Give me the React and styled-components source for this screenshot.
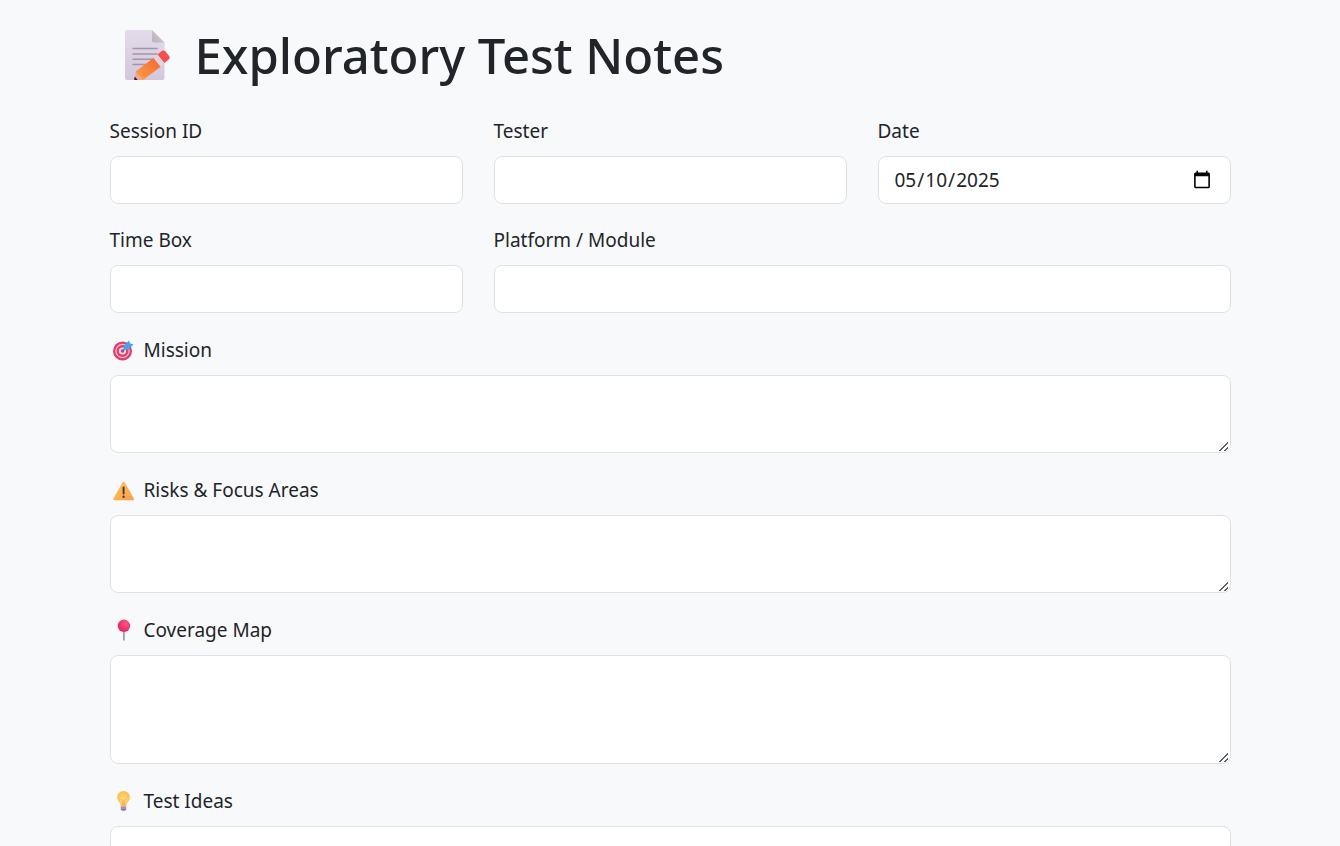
import React, { useState } from "react";
import styled, { createGlobalStyle } from "styled-components";

const GlobalStyle = createGlobalStyle`
  *,
  *::before,
  *::after {
    box-sizing: border-box;
  }

  body {
    margin: 0;
    background: #f8f9fa;
    color: #212529;
    font-family: "Segoe UI", "Noto Sans", sans-serif;
    font-size: 19px;
    line-height: 31px;
  }
`;

const Page = styled.main`
  max-width: 1153px;
  margin: 0 auto;
  padding: 25px 16px 48px;
`;

const Title = styled.h1`
  display: flex;
  align-items: center;
  gap: 15px;
  margin: 0 0 31px;
  padding-left: 10px;
  font-size: 49px;
  font-weight: 500;
  line-height: 60px;
`;

const Form = styled.form`
  display: flex;
  flex-direction: column;
  gap: 22px;
`;

const FieldGrid = styled.div`
  display: grid;
  grid-template-columns: repeat(3, 1fr);
  gap: 21px 31px;

  @media (max-width: 700px) {
    grid-template-columns: 1fr;
  }
`;

const Field = styled.div`
  min-width: 0;
  grid-column: ${({ $wide }) => ($wide ? "span 2" : "auto")};

  @media (max-width: 700px) {
    grid-column: auto;
  }
`;

const Label = styled.label`
  display: flex;
  align-items: center;
  gap: 8px;
  margin-bottom: 9px;
`;

const Input = styled.input`
  display: block;
  width: 100%;
  height: 48px;
  padding: 8px 16px 8px 15px;
  border: 1px solid #dee2e6;
  border-radius: 8px;
  background: #fff;
  color: inherit;
  font: inherit;

  &::-webkit-datetime-edit {
    padding: 0;
  }

  &::-webkit-datetime-edit-fields-wrapper {
    padding: 0;
  }

  &::-webkit-calendar-picker-indicator {
    width: 20px;
    height: 20px;
  }

  &:focus {
    outline: 4px solid #c2dbfe;
    border-color: #86b7fe;
  }
`;

const TextArea = styled(Input)`
  height: ${({ $tall }) => ($tall ? 109 : 78)}px;
  resize: vertical;

  &::-webkit-resizer {
    background: linear-gradient(
        135deg,
        transparent 45%,
        #606060 45%,
        #606060 56%,
        transparent 56%,
        transparent 73%,
        #606060 73%,
        #606060 84%,
        transparent 84%
      )
      right 2px bottom 1px / 9px 9px no-repeat;
  }
`;

const Icon = styled.svg`
  flex: none;
  width: ${({ $size }) => $size || 26}px;
  height: ${({ $size }) => $size || 26}px;
`;

function MemoIcon() {
  return (
    <Icon $size={60} viewBox="0 0 60 60" aria-hidden="true">
      <defs>
        <linearGradient id="paper" x1="0" y1="0" x2="0" y2="1">
          <stop offset="0" stopColor="#e3dbea" />
          <stop offset="1" stopColor="#d3c7dc" />
        </linearGradient>
        <linearGradient id="fold" x1="0" y1="1" x2="1" y2="0">
          <stop offset="0" stopColor="#b9b2bb" />
          <stop offset="1" stopColor="#d5cfd8" />
        </linearGradient>
        <linearGradient id="pencil" x1="0" y1="1" x2="1" y2="0">
          <stop offset="0" stopColor="#ffa04a" />
          <stop offset="1" stopColor="#f4652c" />
        </linearGradient>
      </defs>
      <path d="M7 5h25l12.500 12.500V53a2 2 0 0 1-2 2H7a2 2 0 0 1-2-2V7a2 2 0 0 1 2-2z" fill="url(#paper)" />
      <path d="M32 5l12.500 12.500H34a2 2 0 0 1-2-2z" fill="url(#fold)" />
      <path d="M13 23.500h24M13 29h24M13 34.300h24M13 39.500h18" stroke="#a096a8" strokeWidth="1.500" strokeLinecap="round" />
      <path d="M15.800 46.500L34 32.500l7 9L23 55h-5z" fill="url(#pencil)" />
      <path d="M15.800 46.500L23 55h-8.500z" fill="#e5ae91" />
      <path d="M14.700 51.500l-.5 3.500h3.500z" fill="#3a1238" />
      <path d="M33.500 33l4.500-3.600 7 8.800-4.500 3.600z" fill="#ded4e6" />
      <path d="M37.500 29.500l4-3.300c1.500-1.200 3-1 4.100.3l3.300 4.200c1.100 1.400 1 2.900-.4 4l-4 3.300z" fill="#f75048" />
    </Icon>
  );
}

function TargetIcon() {
  return (
    <Icon viewBox="0 1 26 26" aria-hidden="true">
      <circle cx="12.500" cy="14" r="9.500" fill="#df3f68" />
      <circle cx="12.500" cy="14" r="7.200" fill="#efc4d8" />
      <circle cx="12.500" cy="14" r="6" fill="#df3f68" />
      <circle cx="12.500" cy="14" r="3.600" fill="#f1d7e4" />
      <circle cx="12.500" cy="14" r="1.800" fill="#df3f68" />
      <path d="M12.500 14l6-6" stroke="#2476c4" strokeWidth="1.500" strokeLinecap="round" />
      <path d="M14 8.500l5-5 1.200 2.900 3.300.8-5.200 5.600-4.100-.6z" fill="#42a5ee" />
    </Icon>
  );
}

function WarningIcon() {
  return (
    <Icon viewBox="0 1 26 26" aria-hidden="true">
      <defs>
        <linearGradient id="warning" x1="0" y1="0" x2="1" y2="1">
          <stop offset="0" stopColor="#ffc950" />
          <stop offset="1" stopColor="#f89b50" />
        </linearGradient>
      </defs>
      <path d="M12.300 5.700c.7-1.200 2-1.200 2.700 0l8.800 15.700c.6 1.100 0 1.900-1.300 1.900H4.800c-1.300 0-1.900-.8-1.300-1.900z" fill="url(#warning)" />
      <path d="M13.600 10.500v6" stroke="#493c38" strokeWidth="2" strokeLinecap="round" />
      <circle cx="13.600" cy="19.800" r="1.200" fill="#493c38" />
    </Icon>
  );
}

function PinIcon() {
  return (
    <Icon viewBox="0 1 26 26" aria-hidden="true">
      <defs>
        <radialGradient id="pin" cx=".65" cy=".3" r=".7">
          <stop offset="0" stopColor="#ff5384" />
          <stop offset="1" stopColor="#e2285e" />
        </radialGradient>
      </defs>
      <path d="M13.900 13v10" stroke="#9d8ea8" strokeWidth="1.600" strokeLinecap="round" />
      <circle cx="13.900" cy="8.800" r="6.200" fill="url(#pin)" />
    </Icon>
  );
}

function BulbIcon() {
  return (
    <Icon viewBox="0 1 26 26" aria-hidden="true">
      <defs>
        <radialGradient id="bulb" cx=".5" cy=".55" r=".6">
          <stop offset="0" stopColor="#ffe08a" />
          <stop offset="1" stopColor="#fbb93d" />
        </radialGradient>
      </defs>
      <path d="M13.500 3a6.300 6.300 0 0 1 6.300 6.300c0 2.700-1.300 4-2.300 5.300-.8 1-.9 2.400-1.200 3.900h-5.600c-.3-1.500-.4-2.900-1.200-3.900-1-1.300-2.300-2.600-2.300-5.300A6.300 6.300 0 0 1 13.500 3z" fill="url(#bulb)" />
      <path d="M11.500 11l1.300 1.500v5M15.500 11l-1.300 1.500v5" fill="none" stroke="#ef9b35" strokeWidth=".7" />
      <path d="M10.800 18.500h5.400v3l-1.200 1.300h-3l-1.200-1.300z" fill="#9877a8" />
      <path d="M10.800 20h5.400" stroke="#c7b2d0" strokeWidth=".8" />
    </Icon>
  );
}

const sections = [
  { id: "mission", label: "Mission", icon: TargetIcon },
  { id: "risks", label: "Risks & Focus Areas", icon: WarningIcon },
  { id: "coverage", label: "Coverage Map", icon: PinIcon, tall: true },
  { id: "ideas", label: "Test Ideas", icon: BulbIcon, tall: true },
];

export default function App() {
  const [date, setDate] = useState("2025-05-10");

  return (
    <>
      <GlobalStyle />
      <Page>
        <Title>
          <MemoIcon />
          Exploratory Test Notes
        </Title>
        <Form>
          <FieldGrid>
            <Field>
              <Label htmlFor="session">Session ID</Label>
              <Input id="session" type="text" />
            </Field>
            <Field>
              <Label htmlFor="tester">Tester</Label>
              <Input id="tester" type="text" />
            </Field>
            <Field>
              <Label htmlFor="date">Date</Label>
              <Input
                id="date"
                type="date"
                value={date}
                onChange={(e) => setDate(e.target.value)}
              />
            </Field>
            <Field>
              <Label htmlFor="timebox">Time Box</Label>
              <Input id="timebox" type="text" />
            </Field>
            <Field $wide>
              <Label htmlFor="platform">Platform / Module</Label>
              <Input id="platform" type="text" />
            </Field>
          </FieldGrid>
          {sections.map(({ id, label, icon: SectionIcon, tall }) => (
            <Field key={id}>
              <Label htmlFor={id}>
                <SectionIcon />
                {label}
              </Label>
              <TextArea as="textarea" id={id} $tall={tall} />
            </Field>
          ))}
        </Form>
      </Page>
    </>
  );
}
